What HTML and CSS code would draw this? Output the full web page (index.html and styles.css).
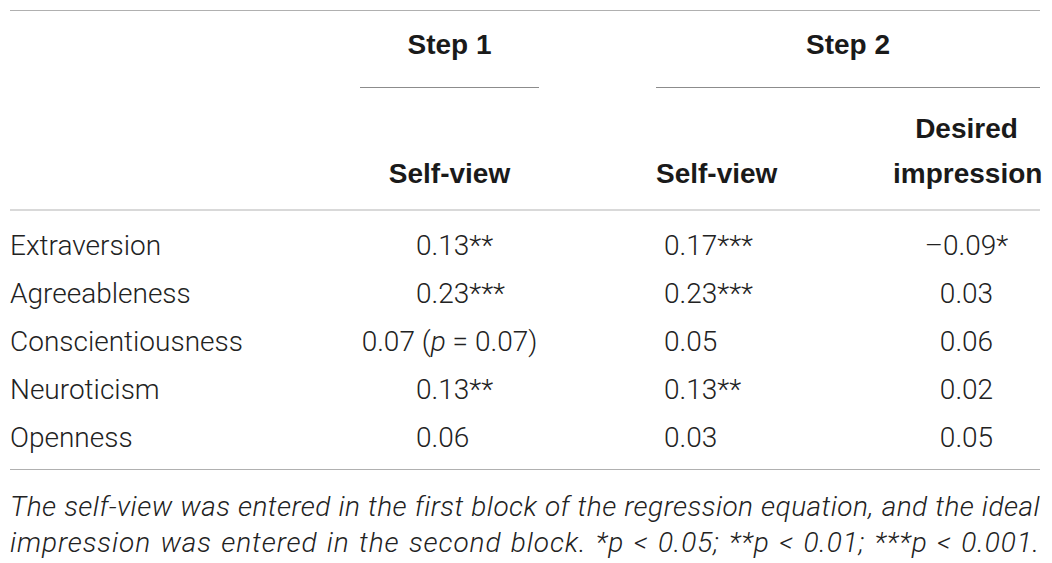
FILE: index.html
```html
<!DOCTYPE html>
<html lang="en">
<head>
<meta charset="utf-8">
<title>Regression table</title>
<link rel="stylesheet" href="styles.css">
</head>
<body>
<div class="wrap">
  <div class="table">
    <div class="row head1">
      <div class="step s1col">Step 1</div>
      <div class="step s2span">Step 2</div>
    </div>
    <div class="row head2">
      <div class="hcell c2">Self-view</div>
      <div class="hcell c4">Self-view</div>
      <div class="hcell c6">Desired<br>impression</div>
    </div>
    <div class="body">
      <div class="row data">
        <div class="label">Extraversion</div>
        <div class="v1">0.13**</div>
        <div class="v2">0.17***</div>
        <div class="v3">–0.09*</div>
      </div>
      <div class="row data">
        <div class="label">Agreeableness</div>
        <div class="v1">0.23***</div>
        <div class="v2">0.23***</div>
        <div class="v3">0.03</div>
      </div>
      <div class="row data">
        <div class="label">Conscientiousness</div>
        <div class="v1 wide">0.07 (<i>p</i> = 0.07)</div>
        <div class="v2">0.05</div>
        <div class="v3">0.06</div>
      </div>
      <div class="row data">
        <div class="label">Neuroticism</div>
        <div class="v1">0.13**</div>
        <div class="v2">0.13**</div>
        <div class="v3">0.02</div>
      </div>
      <div class="row data">
        <div class="label">Openness</div>
        <div class="v1">0.06</div>
        <div class="v2">0.03</div>
        <div class="v3">0.05</div>
      </div>
    </div>
  </div>
  <div class="note">
    <span class="line">The self-view was entered in the first block of the regression equation, and the ideal</span>
    <span class="line second">impression was entered in the second block. *p &lt; 0.05; **p &lt; 0.01; ***p &lt; 0.001.</span>
  </div>
</div>
</body>
</html>
```

FILE: styles.css
```css
html, body {
  margin: 0;
  padding: 0;
  background: #ffffff;
}

body {
  font-family: Roboto, "Liberation Sans", Arial, sans-serif;
  font-weight: 300;
  color: #222222;
}

.wrap {
  padding: 10px 12px 0 10px;
  width: 1030px;
}

.table {
  border-top: 1px solid #b0b0b0;
  border-bottom: 1px solid #b0b0b0;
}

.row {
  display: grid;
  grid-template-columns: 350px 179px 117px 119px 118px 147px;
}

.head1 {
  padding-top: 19px;
  font-family: "Liberation Sans", Arial, sans-serif;
  font-weight: 700;
  font-size: 28px;
  line-height: 30px;
  color: #1a1a1a;
}

.step {
  text-align: center;
  padding-bottom: 27px;
  border-bottom: 1px solid #8c8c8c;
}

.s1col {
  grid-column: 2 / 3;
}

.s2span {
  grid-column: 4 / 7;
}

.head2 {
  align-items: end;
  padding-top: 18px;
  padding-bottom: 13px;
  border-bottom: 2px solid #d9d9d9;
  font-family: "Liberation Sans", Arial, sans-serif;
  font-weight: 700;
  font-size: 28px;
  line-height: 45px;
  color: #1a1a1a;
}

.hcell {
  text-align: center;
  white-space: nowrap;
}

.c2 { grid-column: 2 / 3; }
.c4 { grid-column: 4 / 5; }
.c6 { grid-column: 6 / 7; }

.body {
  padding-top: 11px;
  padding-bottom: 7px;
}

.data {
  height: 48px;
  align-items: center;
  font-size: 28px;
  line-height: 48px;
}

.label {
  grid-column: 1 / 2;
  white-space: nowrap;
}

.v1 {
  grid-column: 2 / 3;
  padding-left: 56px;
  white-space: nowrap;
}

.v1.wide {
  padding-left: 0;
  text-align: center;
  margin-left: -12px;
  margin-right: -12px;
}

.v2 {
  grid-column: 4 / 5;
  padding-left: 8px;
  white-space: nowrap;
}

.v3 {
  grid-column: 6 / 7;
  text-align: center;
  white-space: nowrap;
}

.note {
  padding-top: 19px;
  font-style: italic;
  font-size: 28px;
  line-height: 36px;
  letter-spacing: 0.45px;
  color: #222222;
  width: 1030px;
}

.line {
  display: block;
  text-align: justify;
  text-align-last: justify;
}

.line.second {
  letter-spacing: 0.9px;
}
```
